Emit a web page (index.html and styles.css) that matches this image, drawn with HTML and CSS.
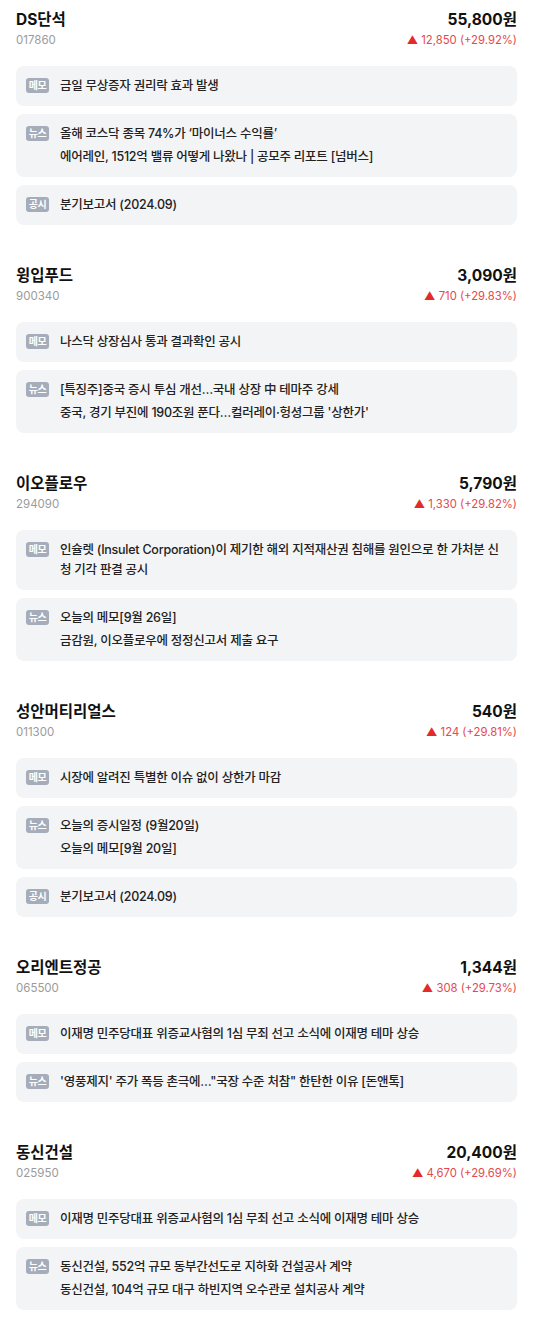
FILE: index.html
```html
<!DOCTYPE html>
<html lang="ko">

<head>
    <meta charset="UTF-8">
    <title>상한가 종목</title>
    <link rel="stylesheet" href="styles.css">
</head>

<body>

    <main class="list">

        <section class="stock">
            <div class="head">
                <div>
                    <h2 class="name">DS단석</h2>
                    <p class="code">017860</p>
                </div>
                <div class="quote">
                    <p class="price">55,800원</p>
                    <p class="change"><span class="arrow">▲</span> 12,850 (+29.92%)</p>
                </div>
            </div>
            <ul class="notes">
                <li class="note"><span class="tag">메모</span>
                    <div class="body"><p>금일 무상증자 권리락 효과 발생</p></div>
                </li>
                <li class="note"><span class="tag">뉴스</span>
                    <div class="body">
                        <p>올해 코스닥 종목 74%가 ‘마이너스 수익률’</p>
                        <p>에어레인, 1512억 밸류 어떻게 나왔나 | 공모주 리포트 [넘버스]</p>
                    </div>
                </li>
                <li class="note"><span class="tag">공시</span>
                    <div class="body"><p>분기보고서 (2024.09)</p></div>
                </li>
            </ul>
        </section>

        <section class="stock">
            <div class="head">
                <div>
                    <h2 class="name">윙입푸드</h2>
                    <p class="code">900340</p>
                </div>
                <div class="quote">
                    <p class="price">3,090원</p>
                    <p class="change"><span class="arrow">▲</span> 710 (+29.83%)</p>
                </div>
            </div>
            <ul class="notes">
                <li class="note"><span class="tag">메모</span>
                    <div class="body"><p>나스닥 상장심사 통과 결과확인 공시</p></div>
                </li>
                <li class="note"><span class="tag">뉴스</span>
                    <div class="body">
                        <p>[특징주]중국 증시 투심 개선…국내 상장 中 테마주 강세</p>
                        <p>중국, 경기 부진에 190조원 푼다…컬러레이·헝셩그룹 '상한가'</p>
                    </div>
                </li>
            </ul>
        </section>

        <section class="stock">
            <div class="head">
                <div>
                    <h2 class="name">이오플로우</h2>
                    <p class="code">294090</p>
                </div>
                <div class="quote">
                    <p class="price">5,790원</p>
                    <p class="change"><span class="arrow">▲</span> 1,330 (+29.82%)</p>
                </div>
            </div>
            <ul class="notes">
                <li class="note"><span class="tag">메모</span>
                    <div class="body"><p>인슐렛 (Insulet Corporation)이 제기한 해외 지적재산권 침해를 원인으로 한 가처분 신청 기각 판결 공시</p></div>
                </li>
                <li class="note"><span class="tag">뉴스</span>
                    <div class="body">
                        <p>오늘의 메모[9월 26일]</p>
                        <p>금감원, 이오플로우에 정정신고서 제출 요구</p>
                    </div>
                </li>
            </ul>
        </section>

        <section class="stock">
            <div class="head">
                <div>
                    <h2 class="name">성안머티리얼스</h2>
                    <p class="code">011300</p>
                </div>
                <div class="quote">
                    <p class="price">540원</p>
                    <p class="change"><span class="arrow">▲</span> 124 (+29.81%)</p>
                </div>
            </div>
            <ul class="notes">
                <li class="note"><span class="tag">메모</span>
                    <div class="body"><p>시장에 알려진 특별한 이슈 없이 상한가 마감</p></div>
                </li>
                <li class="note"><span class="tag">뉴스</span>
                    <div class="body">
                        <p>오늘의 증시일정 (9월20일)</p>
                        <p>오늘의 메모[9월 20일]</p>
                    </div>
                </li>
                <li class="note"><span class="tag">공시</span>
                    <div class="body"><p>분기보고서 (2024.09)</p></div>
                </li>
            </ul>
        </section>

        <section class="stock">
            <div class="head">
                <div>
                    <h2 class="name">오리엔트정공</h2>
                    <p class="code">065500</p>
                </div>
                <div class="quote">
                    <p class="price">1,344원</p>
                    <p class="change"><span class="arrow">▲</span> 308 (+29.73%)</p>
                </div>
            </div>
            <ul class="notes">
                <li class="note"><span class="tag">메모</span>
                    <div class="body"><p>이재명 민주당대표 위증교사혐의 1심 무죄 선고 소식에 이재명 테마 상승</p></div>
                </li>
                <li class="note"><span class="tag">뉴스</span>
                    <div class="body"><p>'영풍제지' 주가 폭등 촌극에…"국장 수준 처참" 한탄한 이유 [돈앤톡]</p></div>
                </li>
            </ul>
        </section>

        <section class="stock">
            <div class="head">
                <div>
                    <h2 class="name">동신건설</h2>
                    <p class="code">025950</p>
                </div>
                <div class="quote">
                    <p class="price">20,400원</p>
                    <p class="change"><span class="arrow">▲</span> 4,670 (+29.69%)</p>
                </div>
            </div>
            <ul class="notes">
                <li class="note"><span class="tag">메모</span>
                    <div class="body"><p>이재명 민주당대표 위증교사혐의 1심 무죄 선고 소식에 이재명 테마 상승</p></div>
                </li>
                <li class="note"><span class="tag">뉴스</span>
                    <div class="body">
                        <p>동신건설, 552억 규모 동부간선도로 지하화 건설공사 계약</p>
                        <p>동신건설, 104억 규모 대구 하빈지역 오수관로 설치공사 계약</p>
                    </div>
                </li>
            </ul>
        </section>

    </main>

</body>

</html>
```

FILE: styles.css
```css
body {
    margin: 0;
    padding: 8px 16px 22px;
    background-color: white;
    color: #222;
    font-family: Inter, "Noto Sans CJK KR", sans-serif;
}

p,
h2,
ul {
    margin: 0;
    padding: 0;
}

.list {
    display: flex;
    flex-direction: column;
    gap: 39px;
}

/* 종목 헤더 */
.head {
    display: flex;
    justify-content: space-between;
    margin-bottom: 17px;
}

.name {
    font-size: 15.5px;
    line-height: 23px;
    font-weight: 700;
    color: #111;
}

.code {
    font-size: 11.5px;
    line-height: 18px;
    color: #9b9b9b;
}

.quote {
    text-align: right;
}

.price {
    font-size: 15.5px;
    line-height: 23px;
    font-weight: 700;
    color: #111;
}

.change {
    font-size: 11.3px;
    line-height: 18px;
    color: #e5484d;
}

.arrow {
    color: #e42a2a;
}

/* 메모 / 뉴스 / 공시 카드 */
.notes {
    list-style: none;
    display: flex;
    flex-direction: column;
    gap: 8px;
}

.note {
    display: flex;
    align-items: flex-start;
    gap: 11px;
    padding: 10px;
    background-color: #f3f4f6;
    border-radius: 8px;
}

.tag {
    flex: none;
    width: 23px;
    height: 15px;
    margin-top: 2px;
    border-radius: 3px;
    background-color: #a5acba;
    color: white;
    font-size: 10px;
    line-height: 15px;
    font-weight: 700;
    text-align: center;
    letter-spacing: -0.5px;
}

.body {
    display: flex;
    flex-direction: column;
    gap: 3px;
    font-size: 12.5px;
    line-height: 20px;
    font-weight: 500;
    letter-spacing: -0.25px;
}
```
